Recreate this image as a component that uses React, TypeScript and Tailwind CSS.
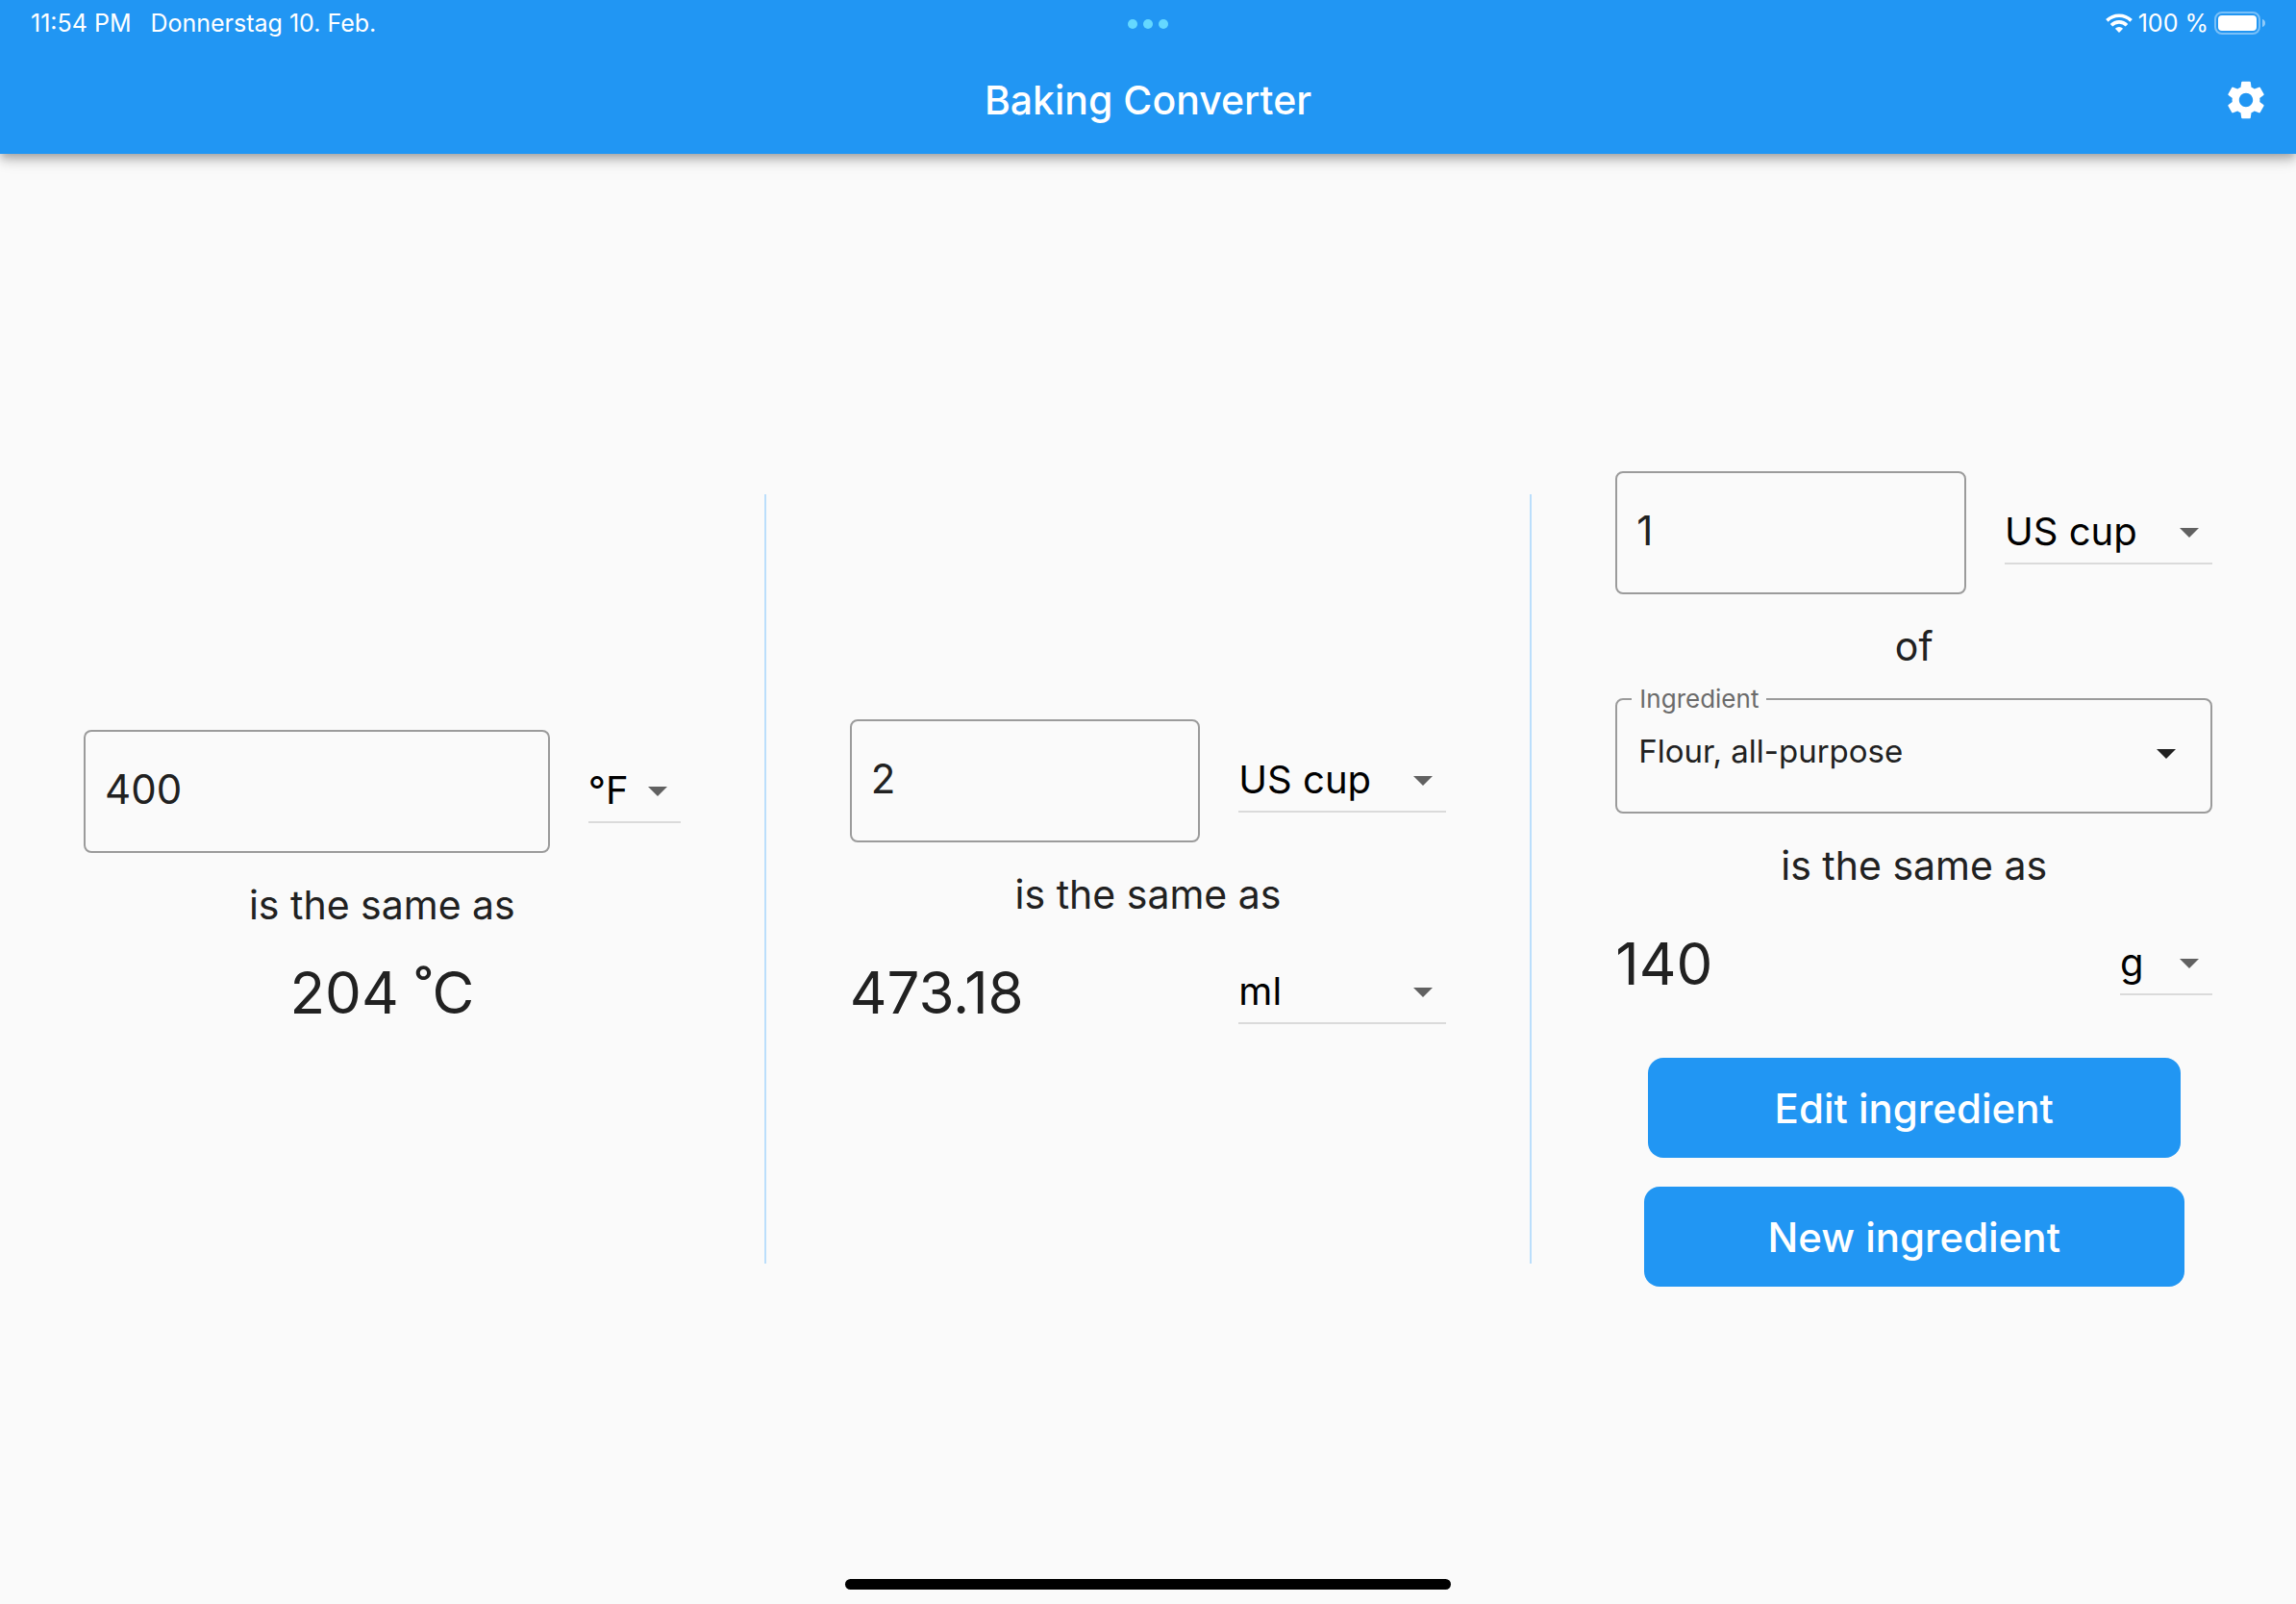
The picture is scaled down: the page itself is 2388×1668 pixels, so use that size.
import { useId, useState } from "react";
import { MdSettings } from "react-icons/md";

function Arrow({ className }: { className: string }) {
  return (
    <svg viewBox="0 0 20 10" className={`pointer-events-none absolute h-[10px] w-5 ${className}`} aria-hidden="true">
      <path d="M0 0h20L10 10z" fill="currentColor" />
    </svg>
  );
}

function AmountInput({ label, initial }: { label: string; initial: string }) {
  const [value, setValue] = useState(initial);
  return (
    <input
      aria-label={label}
      inputMode="decimal"
      value={value}
      onChange={(e) => setValue(e.target.value)}
      className="h-32 min-w-0 flex-1 rounded-lg border-2 border-[#9b9b9b] bg-transparent px-5 pb-[6px] text-[42px] text-[#212121] outline-none"
    />
  );
}

function UnitSelect({ label, options, width }: { label: string; options: string[]; width: string }) {
  return (
    <div className={`relative shrink-0 ${width}`}>
      <select
        aria-label={label}
        className="block h-[66px] w-full appearance-none border-b-2 border-[#dadada] bg-transparent text-[40px] leading-[60px] text-black outline-none"
      >
        {options.map((o) => (
          <option key={o}>{o}</option>
        ))}
      </select>
      <Arrow className="top-7 right-[14px] text-[#616161]" />
    </div>
  );
}

function Caption({ children }: { children: string }) {
  return <p className="text-center text-[41px] leading-[108px]">{children}</p>;
}

function Divider() {
  return <div className="h-[800px] w-[2px] shrink-0 bg-[#bbdefb]" />;
}

function IngredientSelect() {
  const id = useId();
  return (
    <div className="relative h-[120px] rounded-lg border-2 border-[#9b9b9b]">
      <label htmlFor={id} className="absolute -top-4 left-[15px] bg-[#fafafa] px-2 text-[26px] leading-[30px] text-[#6b6b6b]">
        Ingredient
      </label>
      <select
        id={id}
        className="h-full w-full appearance-none bg-transparent px-[22px] pb-2 text-[33px] text-[#212121] outline-none"
      >
        <option>Flour, all-purpose</option>
        <option>Sugar</option>
        <option>Butter</option>
      </select>
      <Arrow className="top-[51px] right-9 text-[#212121]" />
    </div>
  );
}

function StatusBar() {
  return (
    <div className="grid h-12 grid-cols-3 items-center px-8 text-[25px] leading-[30px]">
      <div className="flex gap-5">
        <span>11:54 PM</span>
        <span>Donnerstag 10. Feb.</span>
      </div>
      <div className="flex justify-center gap-[6px] pt-[2px]">
        <span className="size-[10px] rounded-full bg-[#64d8ff]" />
        <span className="size-[10px] rounded-full bg-[#64d8ff]" />
        <span className="size-[10px] rounded-full bg-[#64d8ff]" />
      </div>
      <div className="flex items-center justify-end gap-[6px]">
        <svg viewBox="0 0 28 20" className="h-5 w-7" aria-hidden="true">
          <g fill="none" stroke="white" strokeWidth="3.6">
            <path d="M1.4 7.4a18 18 0 0 1 25.2 0" />
            <path d="M6 12.2a11.4 11.4 0 0 1 16 0" />
          </g>
          <path d="M14 20l-4.1-4.2a5.8 5.8 0 0 1 8.2 0z" fill="white" />
        </svg>
        <span>100 %</span>
        <svg viewBox="0 0 53 24" className="h-6 w-[53px]" aria-hidden="true">
          <rect x="1" y="1" width="46" height="22" rx="7" fill="none" stroke="white" strokeOpacity="0.4" strokeWidth="2" />
          <rect x="4" y="4" width="40" height="16" rx="4" fill="white" />
          <path d="M50 8c2 .6 3 2 3 4s-1 3.400-3 4z" fill="white" fillOpacity="0.5" />
        </svg>
      </div>
    </div>
  );
}

export default function App() {
  return (
    <div className="relative flex min-h-screen flex-col bg-[#fafafa] font-['Inter',sans-serif] text-[#212121]">
      <header className="relative bg-[#2196f3] text-white shadow-[0_4px_8px_-2px_rgba(0,0,0,0.2),0_8px_10px_0_rgba(0,0,0,0.14),0_2px_20px_0_rgba(0,0,0,0.12)]">
        <StatusBar />
        <div className="grid h-28 grid-cols-[1fr_auto_1fr] items-center px-7">
          <h1 className="col-start-2 text-[41px] leading-[48px] font-medium">Baking Converter</h1>
          <button type="button" aria-label="Settings" className="justify-self-end">
            <MdSettings className="size-12" />
          </button>
        </div>
      </header>

      <main className="flex flex-1 items-center">
        <section className="min-w-0 flex-1 px-[87px]">
          <div className="flex items-center gap-10">
            <AmountInput label="Temperature" initial="400" />
            <UnitSelect label="Temperature unit" options={["°F", "°C"]} width="w-24" />
          </div>
          <Caption>is the same as</Caption>
          <p className="text-center text-[60px] leading-[74px]">204 ˚C</p>
        </section>

        <Divider />

        <section className="min-w-0 flex-1 px-[87px]">
          <div className="flex items-center gap-10">
            <AmountInput label="Volume" initial="2" />
            <UnitSelect label="Volume unit" options={["US cup", "ml"]} width="w-[216px]" />
          </div>
          <Caption>is the same as</Caption>
          <div className="flex h-24 items-center justify-between">
            <output className="text-[60px] leading-[74px]">473.18</output>
            <UnitSelect label="Result unit" options={["ml", "US cup"]} width="w-[216px]" />
          </div>
        </section>

        <Divider />

        <section className="min-w-0 flex-1 px-[87px]">
          <div className="flex items-center gap-10">
            <AmountInput label="Ingredient amount" initial="1" />
            <UnitSelect label="Ingredient unit" options={["US cup", "ml"]} width="w-[216px]" />
          </div>
          <Caption>of</Caption>
          <IngredientSelect />
          <Caption>is the same as</Caption>
          <div className="flex h-24 items-center justify-between">
            <output className="text-[60px] leading-[74px]">140</output>
            <UnitSelect label="Weight unit" options={["g", "oz"]} width="w-24" />
          </div>
          <div className="mt-[50px] flex flex-col items-center gap-[30px] text-[42px] font-medium text-white">
            <button type="button" className="h-[104px] w-[554px] rounded-2xl bg-[#2196f3]">
              Edit ingredient
            </button>
            <button type="button" className="h-[104px] w-[562px] rounded-2xl bg-[#2196f3]">
              New ingredient
            </button>
          </div>
        </section>
      </main>

      <div className="absolute bottom-[15px] left-1/2 h-[11px] w-[630px] -translate-x-1/2 rounded-full bg-black" />
    </div>
  );
}
